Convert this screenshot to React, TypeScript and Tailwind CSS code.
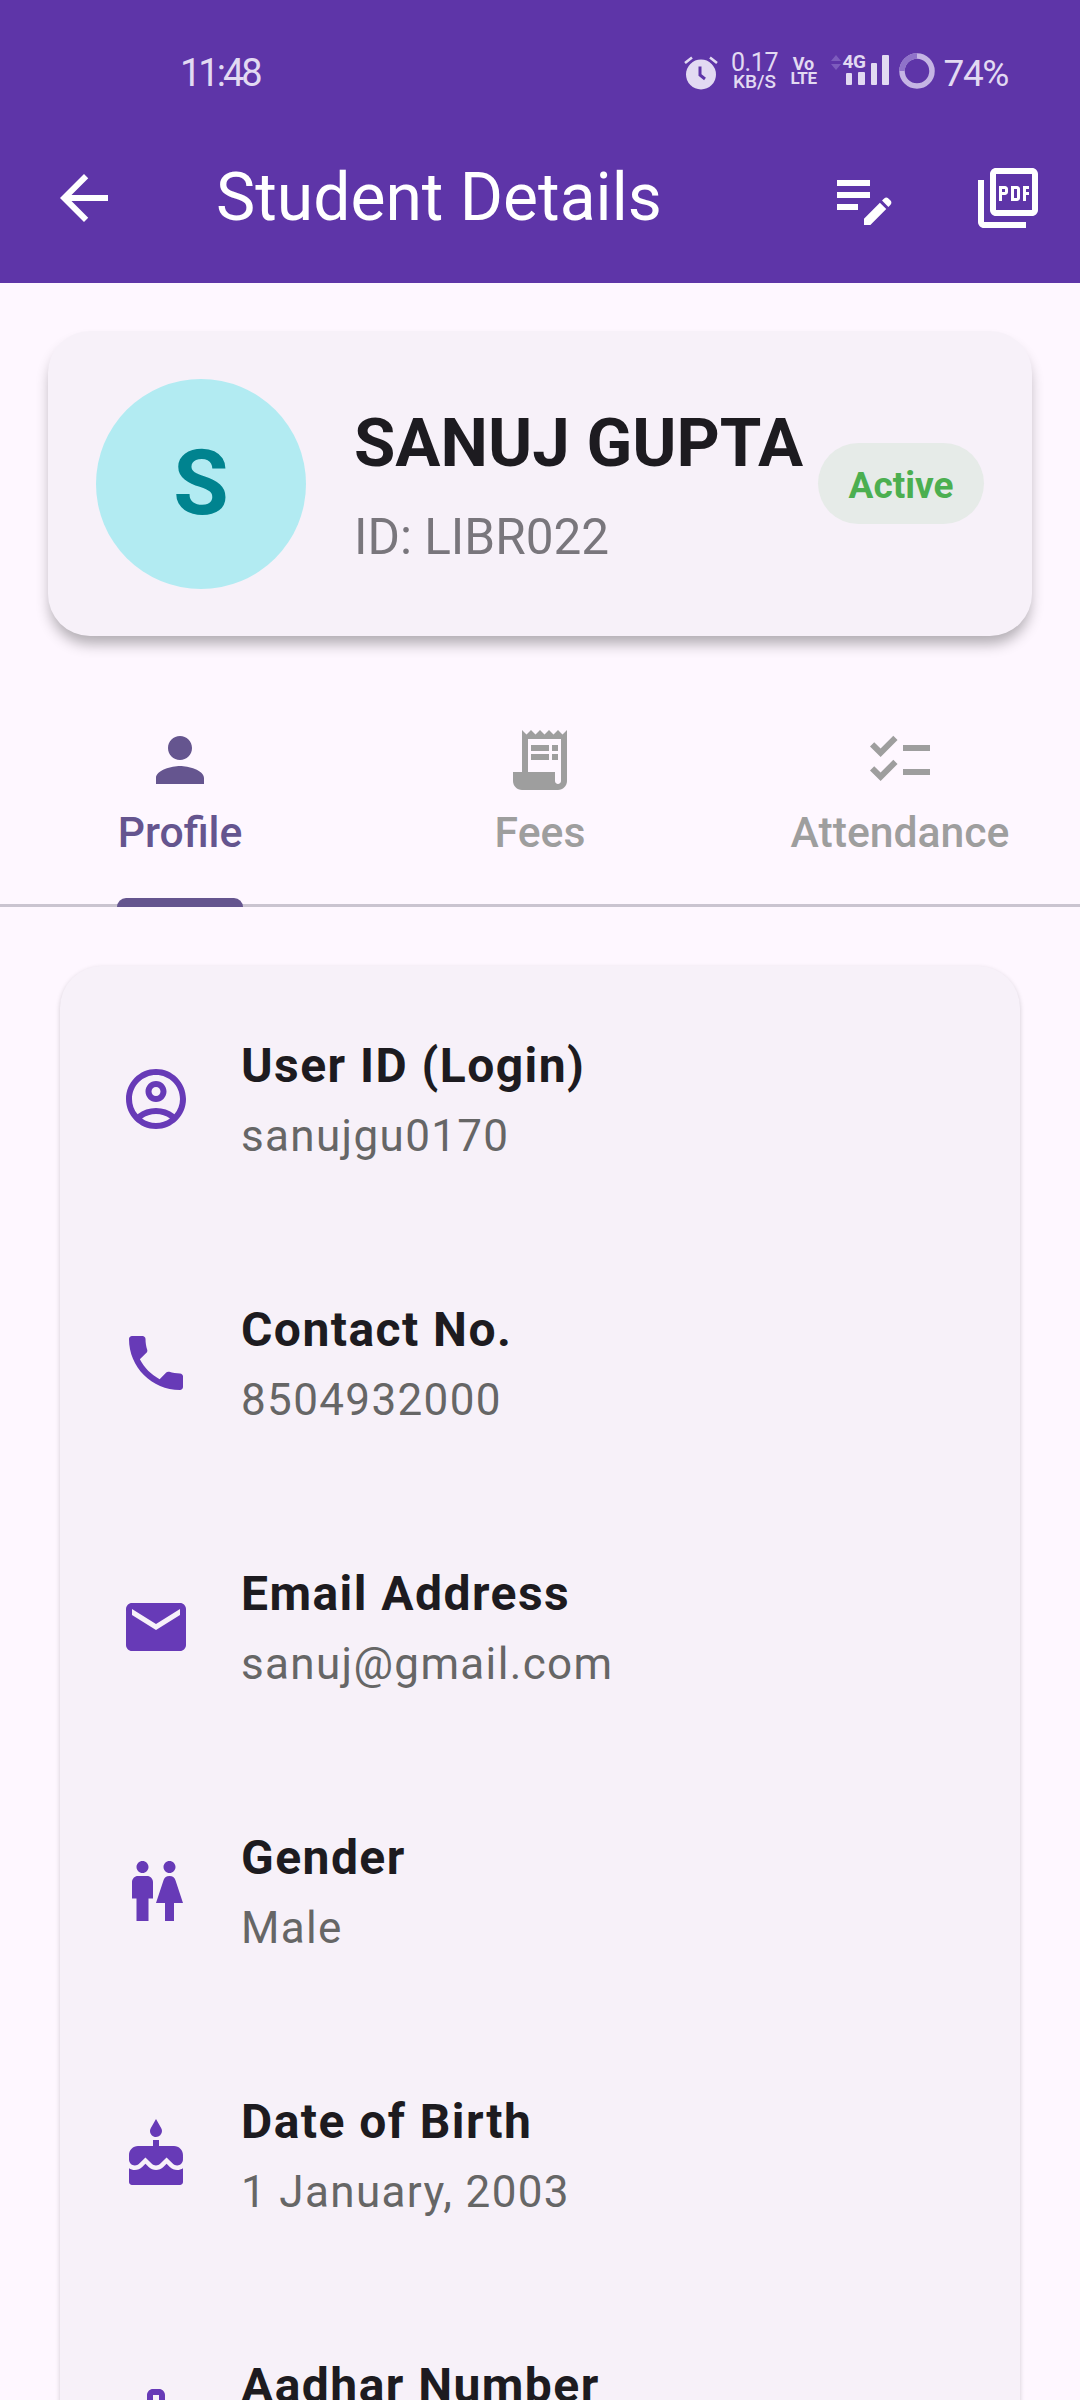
import React from "react";
import {
  MdArrowBack, MdEditNote, MdOutlinePictureAsPdf, MdPerson, MdReceiptLong, MdChecklist,
  MdOutlineAccountCircle, MdPhone, MdEmail, MdWc, MdCake, MdBadge,
} from "react-icons/md";

const rows = [
  { icon: MdOutlineAccountCircle, title: "User ID (Login)", value: "sanujgu0170" },
  { icon: MdPhone, title: "Contact No.", value: "8504932000" },
  { icon: MdEmail, title: "Email Address", value: "sanuj@gmail.com" },
  { icon: MdWc, title: "Gender", value: "Male" },
  { icon: MdCake, title: "Date of Birth", value: "1 January, 2003" },
  { icon: MdBadge, title: "Aadhar Number", value: "" },
];

function StatusBar() {
  return (
    <div className="h-[113px] flex items-start justify-between pt-[52px] pl-[180px] pr-[72px] text-[#e2daf2]">
      <span className="text-[38px] leading-[42px] tracking-[-3px]">11:48</span>
      <div className="flex items-start">
        <svg width="34" height="36" viewBox="0 0 34 36" className="mt-[3px]" aria-hidden="true">
          <circle cx="17" cy="19.5" r="15" fill="#e2daf2" />
          <path d="M1 8l7-5.5M33 8l-7-5.5" stroke="#e2daf2" strokeWidth="2.6" fill="none" />
          <path d="M16 11.5v8.5l5 4" stroke="#5e35a8" strokeWidth="3" fill="none" />
        </svg>
        <div className="ml-[14px] w-[46px] flex flex-col items-center mt-[1px]">
          <span className="text-[25px] leading-[20px] tracking-[-0.4px]">0.17</span>
          <span className="text-[19px] leading-[16px] font-medium mt-[1px]">KB/S</span>
        </div>
        <div className="ml-[14px] w-[24px] flex flex-col items-center mt-[4px] font-bold">
          <span className="text-[18px] leading-[15px]">Vo</span>
          <span className="text-[17px] leading-[15px] tracking-[-0.5px]">LTE</span>
        </div>
        <div className="relative ml-[13px] mt-[3px] w-[62px] h-[30px]">
          <svg width="62" height="30" viewBox="0 0 62 30" aria-hidden="true">
            <path d="M2 6l5-6 5 6zM2 9l5 6 5-6z" fill="#7d5cbd" />
            <rect x="17" y="18" width="6" height="12" rx="1" fill="#e2daf2" />
            <rect x="29" y="17" width="7" height="13" rx="1" fill="#e2daf2" />
            <rect x="42" y="8" width="6" height="22" rx="1" fill="#e2daf2" />
            <rect x="53" y="0" width="7" height="30" rx="1" fill="#e2daf2" />
          </svg>
          <span className="absolute left-[14px] top-[-2px] text-[19px] leading-[18px] font-bold tracking-[-0.5px]">4G</span>
        </div>
        <svg width="36" height="36" viewBox="0 0 36 36" className="ml-[8px] mt-[1px]" aria-hidden="true">
          <circle cx="18" cy="18" r="15" stroke="#c5b5e4" strokeWidth="5.5" fill="none" />
          <path d="M3 18A15 15 0 0 1 18 3" stroke="#8f72c9" strokeWidth="5.5" fill="none" />
        </svg>
        <span className="ml-[9px] text-[37px] leading-[44px] tracking-[-1.4px]">74%</span>
      </div>
    </div>
  );
}

export default function App() {
  return (
    <div className="w-[1080px] h-[2400px] overflow-hidden bg-[#fef7ff] font-['Roboto',sans-serif]">
      <header className="h-[283px] bg-[#5e35a8]">
        <StatusBar />
        <div className="h-[170px] flex items-center pl-[48px] pr-[36px] text-white">
          <MdArrowBack size={72} className="shrink-0" />
          <h1 className="ml-[96px] text-[66px] leading-[80px] font-normal">Student Details</h1>
          <div className="ml-auto flex items-center gap-[72px]">
            <MdEditNote size={72} />
            <MdOutlinePictureAsPdf size={72} />
          </div>
        </div>
      </header>

      <section className="mx-[48px] mt-[48px] h-[305px] rounded-[42px] bg-[#f7f1f9] shadow-[0_10px_14px_-2px_rgba(0,0,0,0.3)] flex items-center pl-[48px] pr-[48px]">
        <div className="w-[210px] h-[210px] rounded-full bg-[#b2ebf2] flex items-center justify-center text-[#00838f] text-[90px] font-bold shrink-0">
          S
        </div>
        <div className="ml-[48px] flex-1">
          <div className="text-[67.2px] leading-[80px] font-bold text-[#1d1b20] whitespace-nowrap">SANUJ GUPTA</div>
          <div className="mt-[26px] text-[49.5px] leading-[56px] text-[#79767c]">ID: LIBR022</div>
        </div>
        <div className="w-[166px] h-[81px] pt-[5px] rounded-full bg-[#e6ebe8] flex items-center justify-center text-[#4caf50] text-[37px] font-bold shrink-0">
          Active
        </div>
      </section>

      <nav className="relative mt-[88px] h-[183px] grid grid-cols-3 border-b-[3px] border-[#cac4d0]">
        {[
          { icon: MdPerson, label: "Profile", active: true },
          { icon: MdReceiptLong, label: "Fees", active: false },
          { icon: MdChecklist, label: "Attendance", active: false },
        ].map((t) => (
          <div key={t.label} className={`flex flex-col items-center ${t.active ? "text-[#65558f]" : "text-[#9e9e9e]"}`}>
            <t.icon size={72} />
            <span className="mt-[11px] text-[42.7px] leading-[50px] font-medium">{t.label}</span>
          </div>
        ))}
        <div className="absolute left-[117px] bottom-[-3px] w-[126px] h-[9px] rounded-t-[9px] bg-[#65558f]" />
      </nav>

      <section className="mx-[60px] mt-[59px] pt-[1px] rounded-[42px] bg-[#f7f1f9] shadow-[0_2px_5px_rgba(0,0,0,0.18)]">
        {rows.map((r) => (
          <div key={r.title} className="h-[264px] flex items-center pl-[60px]">
            <r.icon size={72} className="text-[#673ab7] shrink-0" />
            <div className="ml-[49px] pt-[4px]">
              <div className="text-[48px] leading-[60px] font-bold tracking-[1.45px] text-[#1d1b20]">{r.title}</div>
              <div className="mt-[10px] min-h-[60px] text-[44px] leading-[60px] tracking-[1.35px] text-[#666666]">{r.value}</div>
            </div>
          </div>
        ))}
      </section>
    </div>
  );
}
